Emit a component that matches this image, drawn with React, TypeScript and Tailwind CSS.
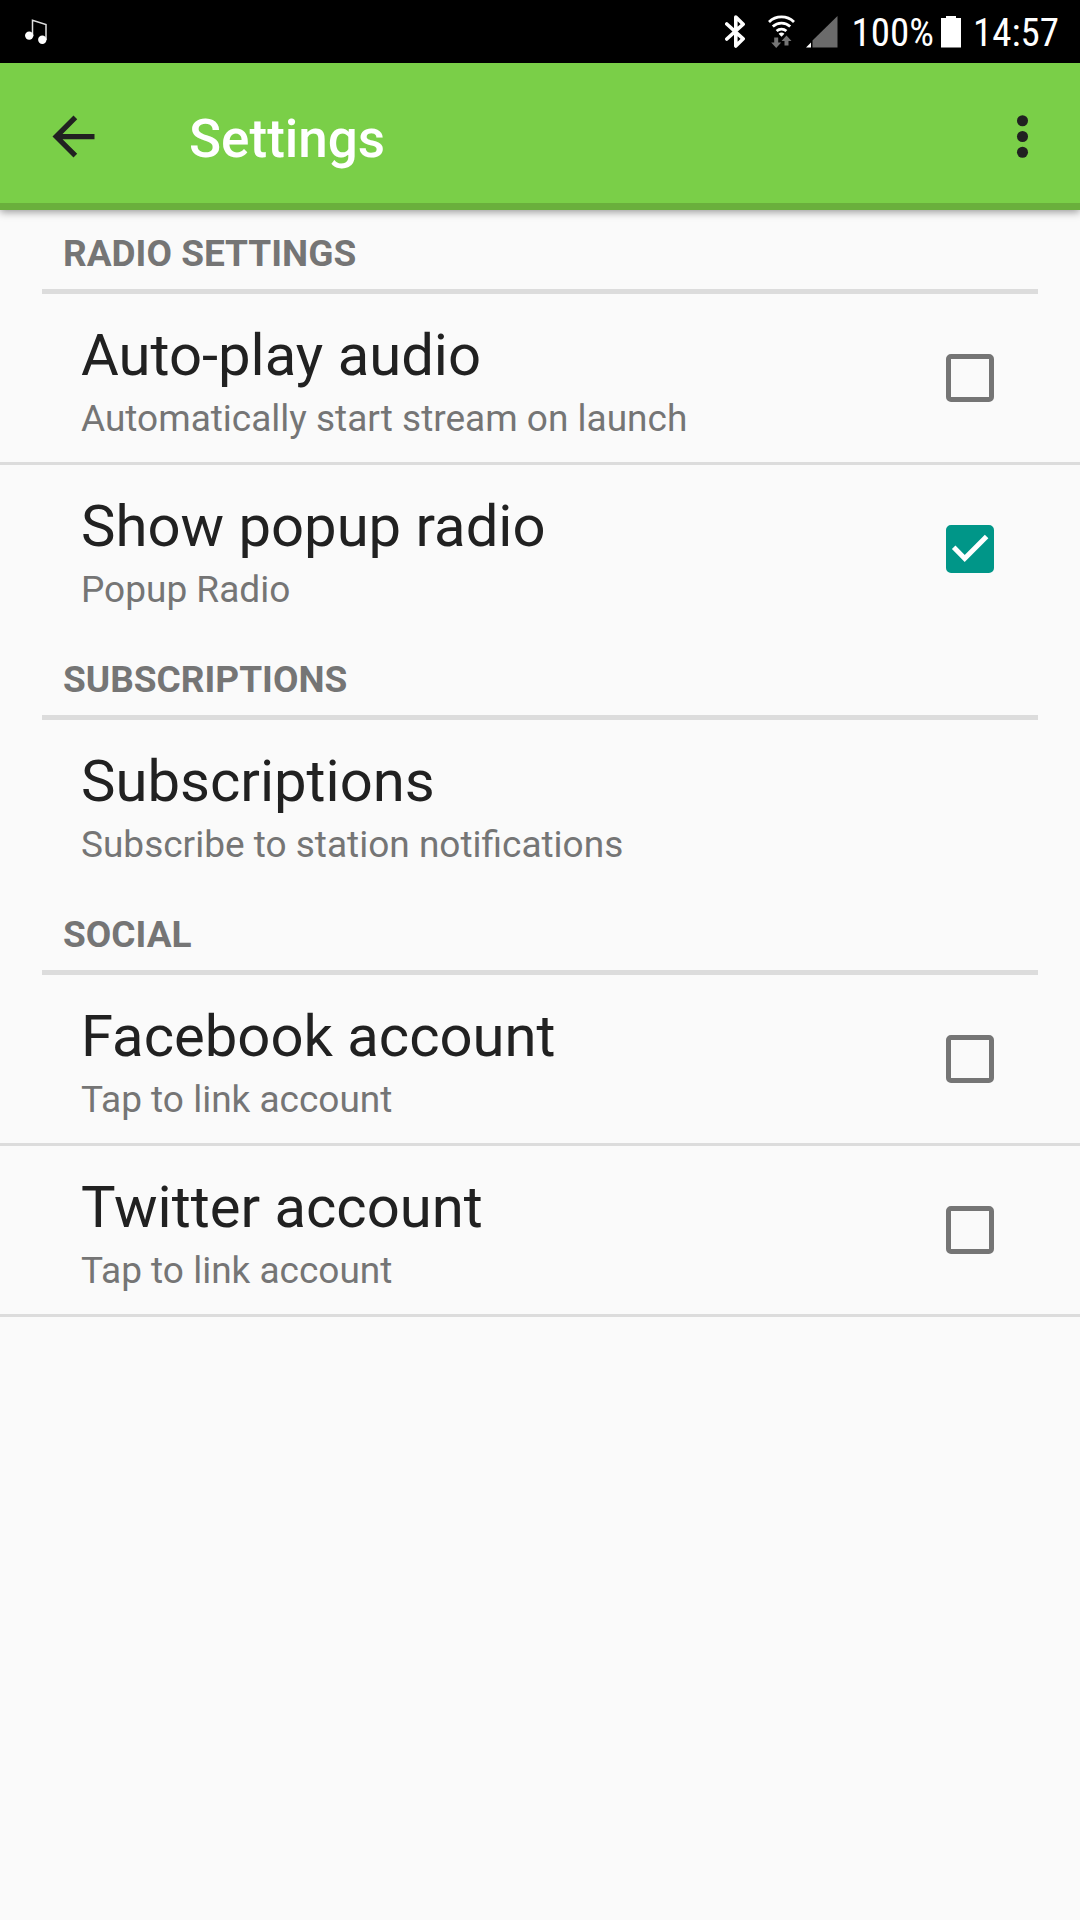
import React, { useState } from "react";

type Item = {
    id: string;
    title: string;
    summary: string;
    toggle?: boolean;
    divider?: boolean;
};

type Section = { heading: string; items: Item[] };

const sections: Section[] = [
    {
        heading: "Radio settings",
        items: [
            { id: "autoplay", title: "Auto-play audio", summary: "Automatically start stream on launch", toggle: true, divider: true },
            { id: "popup", title: "Show popup radio", summary: "Popup Radio", toggle: true },
        ],
    },
    {
        heading: "Subscriptions",
        items: [{ id: "subscriptions", title: "Subscriptions", summary: "Subscribe to station notifications" }],
    },
    {
        heading: "Social",
        items: [
            { id: "facebook", title: "Facebook account", summary: "Tap to link account", toggle: true, divider: true },
            { id: "twitter", title: "Twitter account", summary: "Tap to link account", toggle: true, divider: true },
        ],
    },
];

// --- Status bar ---
const StatusBar: React.FC = () => (
    <div className="flex h-[63px] items-center bg-black pl-[25px] pr-[21px] text-white">
        <svg width="22" height="25" viewBox="0 0 22 25" fill="none" aria-label="Music">
            <path d="M7.5 17V1.2L21 5.5V21" stroke="#e0e0e0" strokeWidth="1.5" />
            <circle cx="4.2" cy="16.6" r="4.2" fill="#fff" />
            <circle cx="17.3" cy="20.8" r="4.2" fill="#fff" />
        </svg>
        <div className="ml-auto flex items-center">
            <svg width="20" height="33" viewBox="0 0 20 33" fill="none" stroke="#fff" strokeWidth="3.6" strokeLinejoin="round" strokeLinecap="round" aria-label="Bluetooth">
                <path d="M1.8 9l16.4 14.8-7.4 7.2V2l7.4 7.2L1.8 24" />
            </svg>
            <svg className="ml-[23px]" width="27" height="33" viewBox="0 0 27 33" fill="none" aria-label="Wi-Fi">
                <g stroke="#fff" strokeWidth="2.8">
                    <path d="M1 7a18 18 0 0 1 25 0" />
                    <path d="M4.8 11.6a12.6 12.6 0 0 1 17.4 0" />
                    <path d="M8.6 16a7.4 7.4 0 0 1 9.8 0" />
                </g>
                <path d="M10.6 18.8a4.4 4.4 0 0 1 5.8 0l-2.9 2.9z" fill="#fff" />
                <path d="M6.2 22.5h4v5h3L8.200 33l-5-5.500h3zM16.500 30.500h4v-4.500h3L18.500 20.500l-5 5.500h3z" fill="#757575" />
            </svg>
            <svg className="ml-[11px]" width="32" height="33" viewBox="0 0 32 33" aria-label="Signal">
                <path d="M31.5 1v31.5h-25v-7z" fill="#6b6b6b" />
                <path d="M0 32.5l5-5v5z" fill="#fff" />
            </svg>
            <span className="ml-[13px] pt-[2px] font-['Roboto_Condensed',Roboto,sans-serif] text-[39px] leading-[44px]">100%</span>
            <svg className="ml-[7px]" width="20" height="33" viewBox="0 0 20 33" fill="#fff" aria-label="Battery">
                <path d="M5 1h10v2h5v29.500H0V3h5z" />
            </svg>
            <span className="ml-[12px] pt-[2px] font-['Roboto_Condensed',Roboto,sans-serif] text-[39px] leading-[44px]">14:57</span>
        </div>
    </div>
);

// --- App bar ---
const AppBar: React.FC = () => (
    <header className="flex h-[147px] items-center border-b-[7px] border-[#6aaf3c] bg-[#7acf48] pl-[42px] pr-[26px] pt-[7px] shadow-[0_2px_8px_rgba(0,0,0,0.4)]">
        <button type="button" aria-label="Back" className="text-[#212121]">
            <svg width="63" height="63" viewBox="0 0 24 24" fill="currentColor">
                <path d="M20 11H7.83l5.59-5.59L12 4l-8 8 8 8 1.41-1.41L7.83 13H20v-2z" />
            </svg>
        </button>
        <h1 className="ml-[84px] pt-[4px] text-[53px] font-medium leading-[62px] text-white">Settings</h1>
        <button type="button" aria-label="More options" className="ml-auto text-[#212121]">
            <svg width="63" height="63" viewBox="0 0 24 24" fill="currentColor">
                <circle cx="12" cy="6" r="2.1" />
                <circle cx="12" cy="12" r="2.1" />
                <circle cx="12" cy="18" r="2.1" />
            </svg>
        </button>
    </header>
);

const CheckBox: React.FC<{ id: string; checked: boolean; onChange: () => void }> = ({ id, checked, onChange }) => (
    <span className="relative size-12 shrink-0">
        <input
            id={id}
            type="checkbox"
            checked={checked}
            onChange={onChange}
            className="block size-12 appearance-none rounded-[5px] border-[5px] border-[#757575] checked:border-[#009688] checked:bg-[#009688]"
        />
        {checked && (
            <svg className="pointer-events-none absolute inset-0" width="48" height="48" viewBox="0 0 48 48" fill="none" stroke="#fff" strokeWidth="5">
                <path d="M7.7 22.3l11 11.1 21.9-21.8" />
            </svg>
        )}
    </span>
);

const ItemText: React.FC<{ item: Item }> = ({ item }) => (
    <span className="block pt-[6px] text-left">
        <span className="block text-[58px] leading-[76px] text-[#212121]">{item.title}</span>
        <span className="block text-[37px] leading-[52px] text-[#757575]">{item.summary}</span>
    </span>
);

const rowClass = "flex w-full items-center justify-between py-[17px] pl-[81px] pr-[86px]";

const App: React.FC = () => {
    const [values, setValues] = useState<{ [key: string]: boolean }>({ popup: true });

    const toggle = (id: string) => setValues(prev => ({ ...prev, [id]: !prev[id] }));

    return (
        <div className="min-h-screen bg-[#fafafa] font-[Roboto,sans-serif]">
            <StatusBar />
            <AppBar />
            <main>
                {sections.map(section => (
                    <section key={section.heading}>
                        <h2 className="mx-[42px] border-b-[5px] border-[#dcdcdc] px-[21px] pb-[13px] pt-[22px] text-[37px] font-bold uppercase leading-[44px] text-[#757575]">
                            {section.heading}
                        </h2>
                        <ul>
                            {section.items.map(item => (
                                <li key={item.id} className={`border-b-[3px] ${item.divider ? "border-[#dcdcdc]" : "border-transparent"}`}>
                                    {item.toggle ? (
                                        <label htmlFor={item.id} className={rowClass}>
                                            <ItemText item={item} />
                                            <CheckBox id={item.id} checked={!!values[item.id]} onChange={() => toggle(item.id)} />
                                        </label>
                                    ) : (
                                        <button type="button" className={rowClass}>
                                            <ItemText item={item} />
                                        </button>
                                    )}
                                </li>
                            ))}
                        </ul>
                    </section>
                ))}
            </main>
        </div>
    );
};

export default App;
